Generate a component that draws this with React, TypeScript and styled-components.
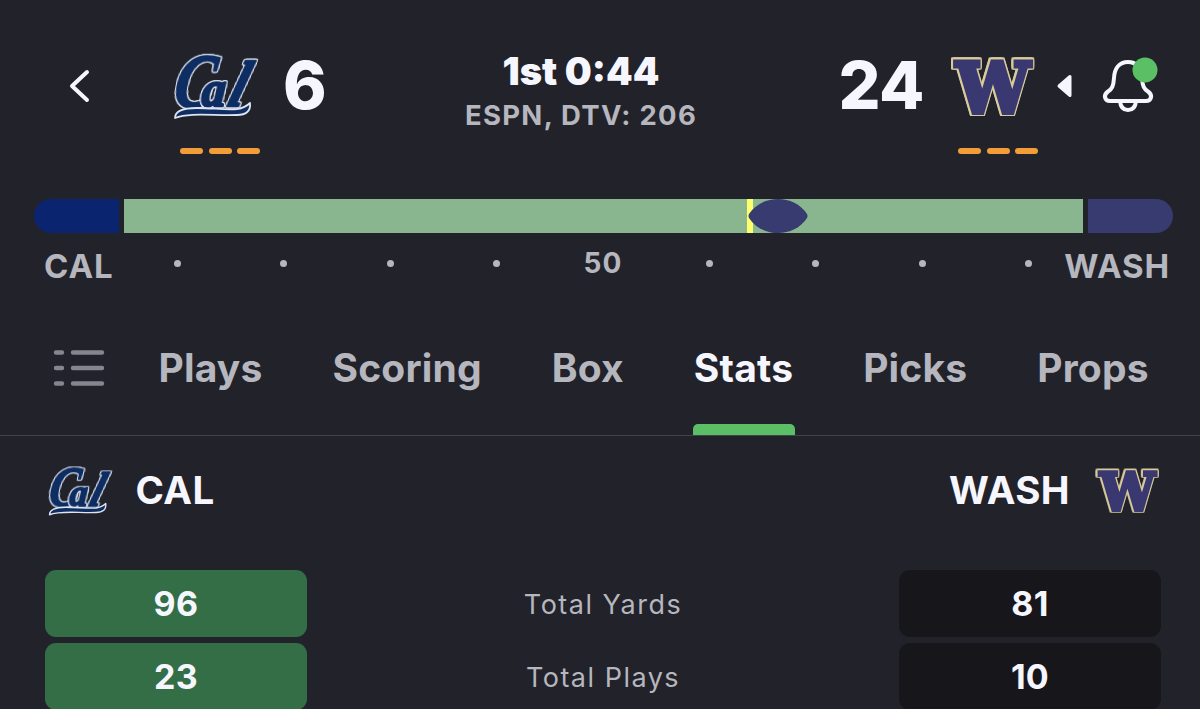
import React from 'react'
import styled, { createGlobalStyle } from 'styled-components'

const colors = {
  background: '#22222a',
  text: '#f6f7fe',
  muted: '#b5b6be',
  icon: '#85858f',
  line: '#42424a',
  green: '#5bc065',
  win: '#336e46',
  dark: '#17171b',
  field: '#8ab68f',
  cal: '#0b2470',
  wash: '#373b70',
  timeout: '#f29d38',
  firstDown: '#fdff6b',
}

const tabs = ['Plays', 'Scoring', 'Box', 'Stats', 'Picks', 'Props']
const yardMarks = ['', '', '', '', '50', '', '', '', '']
const stats = [
  { label: 'Total Yards', away: 96, home: 81 },
  { label: 'Total Plays', away: 23, home: 10 },
]

const CalLogo: React.FC<{ width: number }> = ({ width }) => (
  <Logo width={width} viewBox="0 0 84 68">
    <CalMark>
      <text transform="translate(-1 53) skewX(-10)" fontSize="74" textLength="39" lengthAdjust="spacingAndGlyphs">
        C
      </text>
      <text transform="translate(53 53) skewX(-17)" fontSize="64" textLength="16" lengthAdjust="spacingAndGlyphs">
        l
      </text>
      <text transform="translate(28 53) skewX(-4)" fontSize="50" textLength="24" lengthAdjust="spacingAndGlyphs">
        a
      </text>
    </CalMark>
    <CalSwoosh d="M2 65C2 58 10 55 24 55C39 55 53 57 64 56C71 55 74 53 77 50C78 58 73 62 64 62C42 63 17 59 2 65Z" />
  </Logo>
)

const WashLogo: React.FC<{ width: number }> = ({ width }) => (
  <Logo width={width} viewBox="0 0 84 60">
    <WashMark>
      <text x="5" y="55" fontSize="70" textLength="74" lengthAdjust="spacingAndGlyphs">
        W
      </text>
    </WashMark>
  </Logo>
)

const Timeouts: React.FC = () => (
  <TimeoutRow>
    <Timeout />
    <Timeout />
    <Timeout />
  </TimeoutRow>
)

const App: React.FC = () => {
  return (
    <Container>
      <GlobalStyle />
      <Header>
        <BackButton>
          <svg width="24" height="36" viewBox="0 0 24 36" fill="none">
            <path d="M20 4L5 18L20 32" stroke={colors.text} strokeWidth="4" strokeLinecap="round" strokeLinejoin="round" />
          </svg>
        </BackButton>
        <Team>
          <LogoSlot>
            <CalLogo width={84} />
          </LogoSlot>
          <Timeouts />
        </Team>
        <Score>6</Score>
        <GameInfo>
          <Clock>1st 0:44</Clock>
          <Network>ESPN, DTV: 206</Network>
        </GameInfo>
        <Score $home>24</Score>
        <Team>
          <LogoSlot>
            <WashLogo width={84} />
          </LogoSlot>
          <Timeouts />
        </Team>
        <Possession>
          <svg width="18" height="24" viewBox="0 0 18 24">
            <path d="M14 2.500V21.500L3 12Z" fill={colors.text} stroke={colors.text} strokeWidth="3" strokeLinejoin="round" />
          </svg>
        </Possession>
        <BellButton>
          <svg width="56" height="58" viewBox="0 0 56 58" fill="none" stroke={colors.text} strokeWidth="4" strokeLinejoin="round">
            <path d="M26 5C17 5 12.500 12 12 21C11.500 29 10 32 6 34.500C1 38 2.500 44 8 44H44C49.500 44 51 38 46 34.500C42 32 40.500 29 40 21C39 12 35 5 26 5Z" />
            <path d="M18 44C18.500 50 21.500 53 26 53C30.500 53 33.500 50 34 44" />
            <circle cx="43" cy="13" r="12.500" fill={colors.green} stroke="none" />
          </svg>
        </BellButton>
      </Header>

      <Field>
        <EndZone $color={colors.cal} />
        <Turf>
          <FirstDownLine />
          <Ball width="60" height="34" viewBox="0 0 60 34">
            <path d="M1 15C14 -5 46 -5 59 15Q60 17 59 19C46 39 14 39 1 19Q0 17 1 15Z" fill={colors.wash} />
          </Ball>
        </Turf>
        <EndZone $color={colors.wash} $right />
      </Field>
      <YardRow>
        <TeamLabel>CAL</TeamLabel>
        <Marks>
          {yardMarks.map((mark, i) => (
            <Mark key={i}>{mark ? mark : <Dot />}</Mark>
          ))}
        </Marks>
        <TeamLabel $right>WASH</TeamLabel>
      </YardRow>

      <TabBar>
        <ListIcon width="52" height="38" viewBox="0 0 52 38" stroke={colors.icon} strokeWidth="4.400" strokeLinecap="round">
          <path d="M3 3.500H9M20 3.500H49M3 19H9M20 19H49M3 34.500H9M20 34.500H49" />
        </ListIcon>
        {tabs.map((tab) => (
          <Tab key={tab} $active={tab === 'Stats'}>
            {tab}
          </Tab>
        ))}
      </TabBar>

      <StatsHeader>
        <CalLogo width={63} />
        <TeamName>CAL</TeamName>
        <TeamName $right>WASH</TeamName>
        <WashLogo width={63} />
      </StatsHeader>
      <StatsList>
        {stats.map((item) => (
          <StatRow key={item.label}>
            <StatValue $win={item.away > item.home}>{item.away}</StatValue>
            <StatLabel>{item.label}</StatLabel>
            <StatValue $win={item.home > item.away}>{item.home}</StatValue>
          </StatRow>
        ))}
      </StatsList>
    </Container>
  )
}

export default App

const GlobalStyle = createGlobalStyle`
  * {
    box-sizing: border-box;
  }
  body {
    margin: 0;
    overflow: hidden;
    background: ${colors.background};
  }
  button {
    padding: 0;
    border: 0;
    background: transparent;
    font-family: inherit;
  }
`

const Container = styled.div`
  width: 1200px;
  height: 709px;
  overflow: hidden;
  background: ${colors.background};
  color: ${colors.text};
  font-family: Inter, sans-serif;
`

const Header = styled.header`
  display: grid;
  grid-template-columns: 106px 87px 42px 1fr 91px 87px 64px 56px;
  height: 199px;
  padding: 50px 42px 0 67px;
`

const BackButton = styled.button`
  align-self: start;
  height: 36px;
  margin-top: 18px;
  text-align: left;
`

const Team = styled.div``

const LogoSlot = styled.div`
  display: flex;
  align-items: center;
  height: 73px;
`

const Logo = styled.svg`
  display: block;
  flex: none;
  overflow: visible;
`

const CalMark = styled.g`
  fill: #0d2d63;
  stroke: #0d2d63;
  stroke-width: 2.5px;
  stroke-linejoin: round;
  font-family: 'Liberation Serif', serif;
  font-style: italic;
  font-weight: 700;

  text {
    filter: drop-shadow(1px 0 #dfe5f0) drop-shadow(-1px 0 #dfe5f0)
      drop-shadow(0 1px #dfe5f0) drop-shadow(0 -1px #dfe5f0);
  }
`

const CalSwoosh = styled.path`
  fill: #0d2d63;
  stroke: #dfe5f0;
  stroke-width: 1.8px;
  stroke-linejoin: round;
`

const WashMark = styled.g`
  fill: #393870;
  stroke: #393870;
  stroke-width: 5px;
  font-family: 'DejaVu Serif', serif;
  font-weight: 700;
  filter: drop-shadow(1.2px 0 #d9ca9a) drop-shadow(-1.2px 0 #d9ca9a)
    drop-shadow(0 1.2px #d9ca9a) drop-shadow(0 -1.2px #d9ca9a);
`

const TimeoutRow = styled.div`
  display: flex;
  gap: 5.5px;
  margin: 25px 0 0 7px;
`

const Timeout = styled.div`
  width: 23px;
  height: 6px;
  border-radius: 3px;
  background: ${colors.timeout};
`

const Score = styled.div<{ $home?: boolean }>`
  display: flex;
  justify-content: ${({ $home }) => ($home ? 'flex-end' : 'flex-start')};
  margin: ${({ $home }) => ($home ? '0 27px 0 0' : '0 0 0 23px')};
  font-size: 66px;
  font-weight: 800;
  line-height: 70px;
  letter-spacing: -0.5px;
`

const GameInfo = styled.div`
  text-align: center;
`

const Clock = styled.div`
  font-size: 38px;
  font-weight: 900;
  line-height: 42px;
`

const Network = styled.div`
  margin-top: 7px;
  color: ${colors.muted};
  font-size: 27.5px;
  font-weight: 700;
  line-height: 32px;
  letter-spacing: 1.3px;
`

const Possession = styled.div`
  margin-top: 24px;
  padding-left: 18px;
`

const BellButton = styled.button`
  align-self: start;
  height: 58px;
  margin-top: 7px;
`

const Field = styled.div`
  display: flex;
  gap: 5px;
  height: 34px;
  margin: 0 27px 0 34px;
`

const EndZone = styled.div<{ $color: string; $right?: boolean }>`
  width: 85px;
  border-radius: ${({ $right }) => ($right ? '0 17px 17px 0' : '17px 0 0 17px')};
  background: ${({ $color }) => $color};
`

const Turf = styled.div`
  position: relative;
  flex: 1;
  background: ${colors.field};
`

const FirstDownLine = styled.div`
  position: absolute;
  left: 623px;
  width: 6px;
  height: 100%;
  background: ${colors.firstDown};
`

const Ball = styled.svg`
  position: absolute;
  left: 624px;
`

const YardRow = styled.div`
  display: grid;
  grid-template-columns: 80px 958px 88px;
  height: 101px;
  padding: 10px 30px 0 44px;
`

const TeamLabel = styled.div<{ $right?: boolean }>`
  justify-self: ${({ $right }) => ($right ? 'end' : 'start')};
  color: ${colors.muted};
  font-size: 33px;
  font-weight: 700;
  line-height: 46px;
  letter-spacing: 0.9px;
`

const Marks = styled.div`
  display: grid;
  grid-template-columns: repeat(9, 1fr);
  height: 40px;
`

const Mark = styled.div`
  display: flex;
  align-items: center;
  justify-content: center;
  color: ${colors.muted};
  font-size: 28px;
  font-weight: 700;
  line-height: 38px;
  letter-spacing: 1.2px;
`

const Dot = styled.span`
  width: 7px;
  height: 7px;
  border-radius: 50%;
  background: ${colors.muted};
`

const TabBar = styled.nav`
  display: flex;
  gap: 70px;
  height: 102px;
  padding-left: 53px;
  border-bottom: 1px solid ${colors.line};
`

const ListIcon = styled.svg`
  margin: 15px -16.5px 0 0;
`

const Tab = styled.button<{ $active: boolean }>`
  position: relative;
  padding-bottom: 35px;
  color: ${({ $active }) => ($active ? colors.text : colors.muted)};
  font-size: 39px;
  font-weight: 700;
  letter-spacing: 0.17px;

  &::after {
    content: '';
    display: ${({ $active }) => ($active ? 'block' : 'none')};
    position: absolute;
    right: -2px;
    bottom: 0;
    left: -1px;
    height: 11px;
    border-radius: 5px 5px 0 0;
    background: ${colors.green};
  }
`

const StatsHeader = styled.div`
  display: flex;
  align-items: center;
  height: 110px;
  padding: 0 41px 0 48px;
`

const TeamName = styled.div<{ $right?: boolean }>`
  margin: ${({ $right }) => ($right ? '0 26px 2px auto' : '0 0 2px 24.5px')};
  font-size: 38.5px;
  font-weight: 700;
  letter-spacing: 0.4px;
`

const StatsList = styled.div`
  display: grid;
  gap: 6px;
  margin-top: 24px;
`

const StatRow = styled.div`
  display: grid;
  grid-template-columns: 262px 1fr 262px;
  align-items: center;
  height: 67px;
  margin: 0 39px 0 45px;
`

const StatValue = styled.div<{ $win: boolean }>`
  height: 67px;
  border-radius: 11px;
  background: ${({ $win }) => ($win ? colors.win : colors.dark)};
  font-size: 34px;
  font-weight: 700;
  line-height: 67px;
  letter-spacing: 0.3px;
  text-align: center;
`

const StatLabel = styled.div`
  padding-top: 2px;
  color: ${colors.muted};
  font-size: 27px;
  letter-spacing: 1.5px;
  text-align: center;
`
